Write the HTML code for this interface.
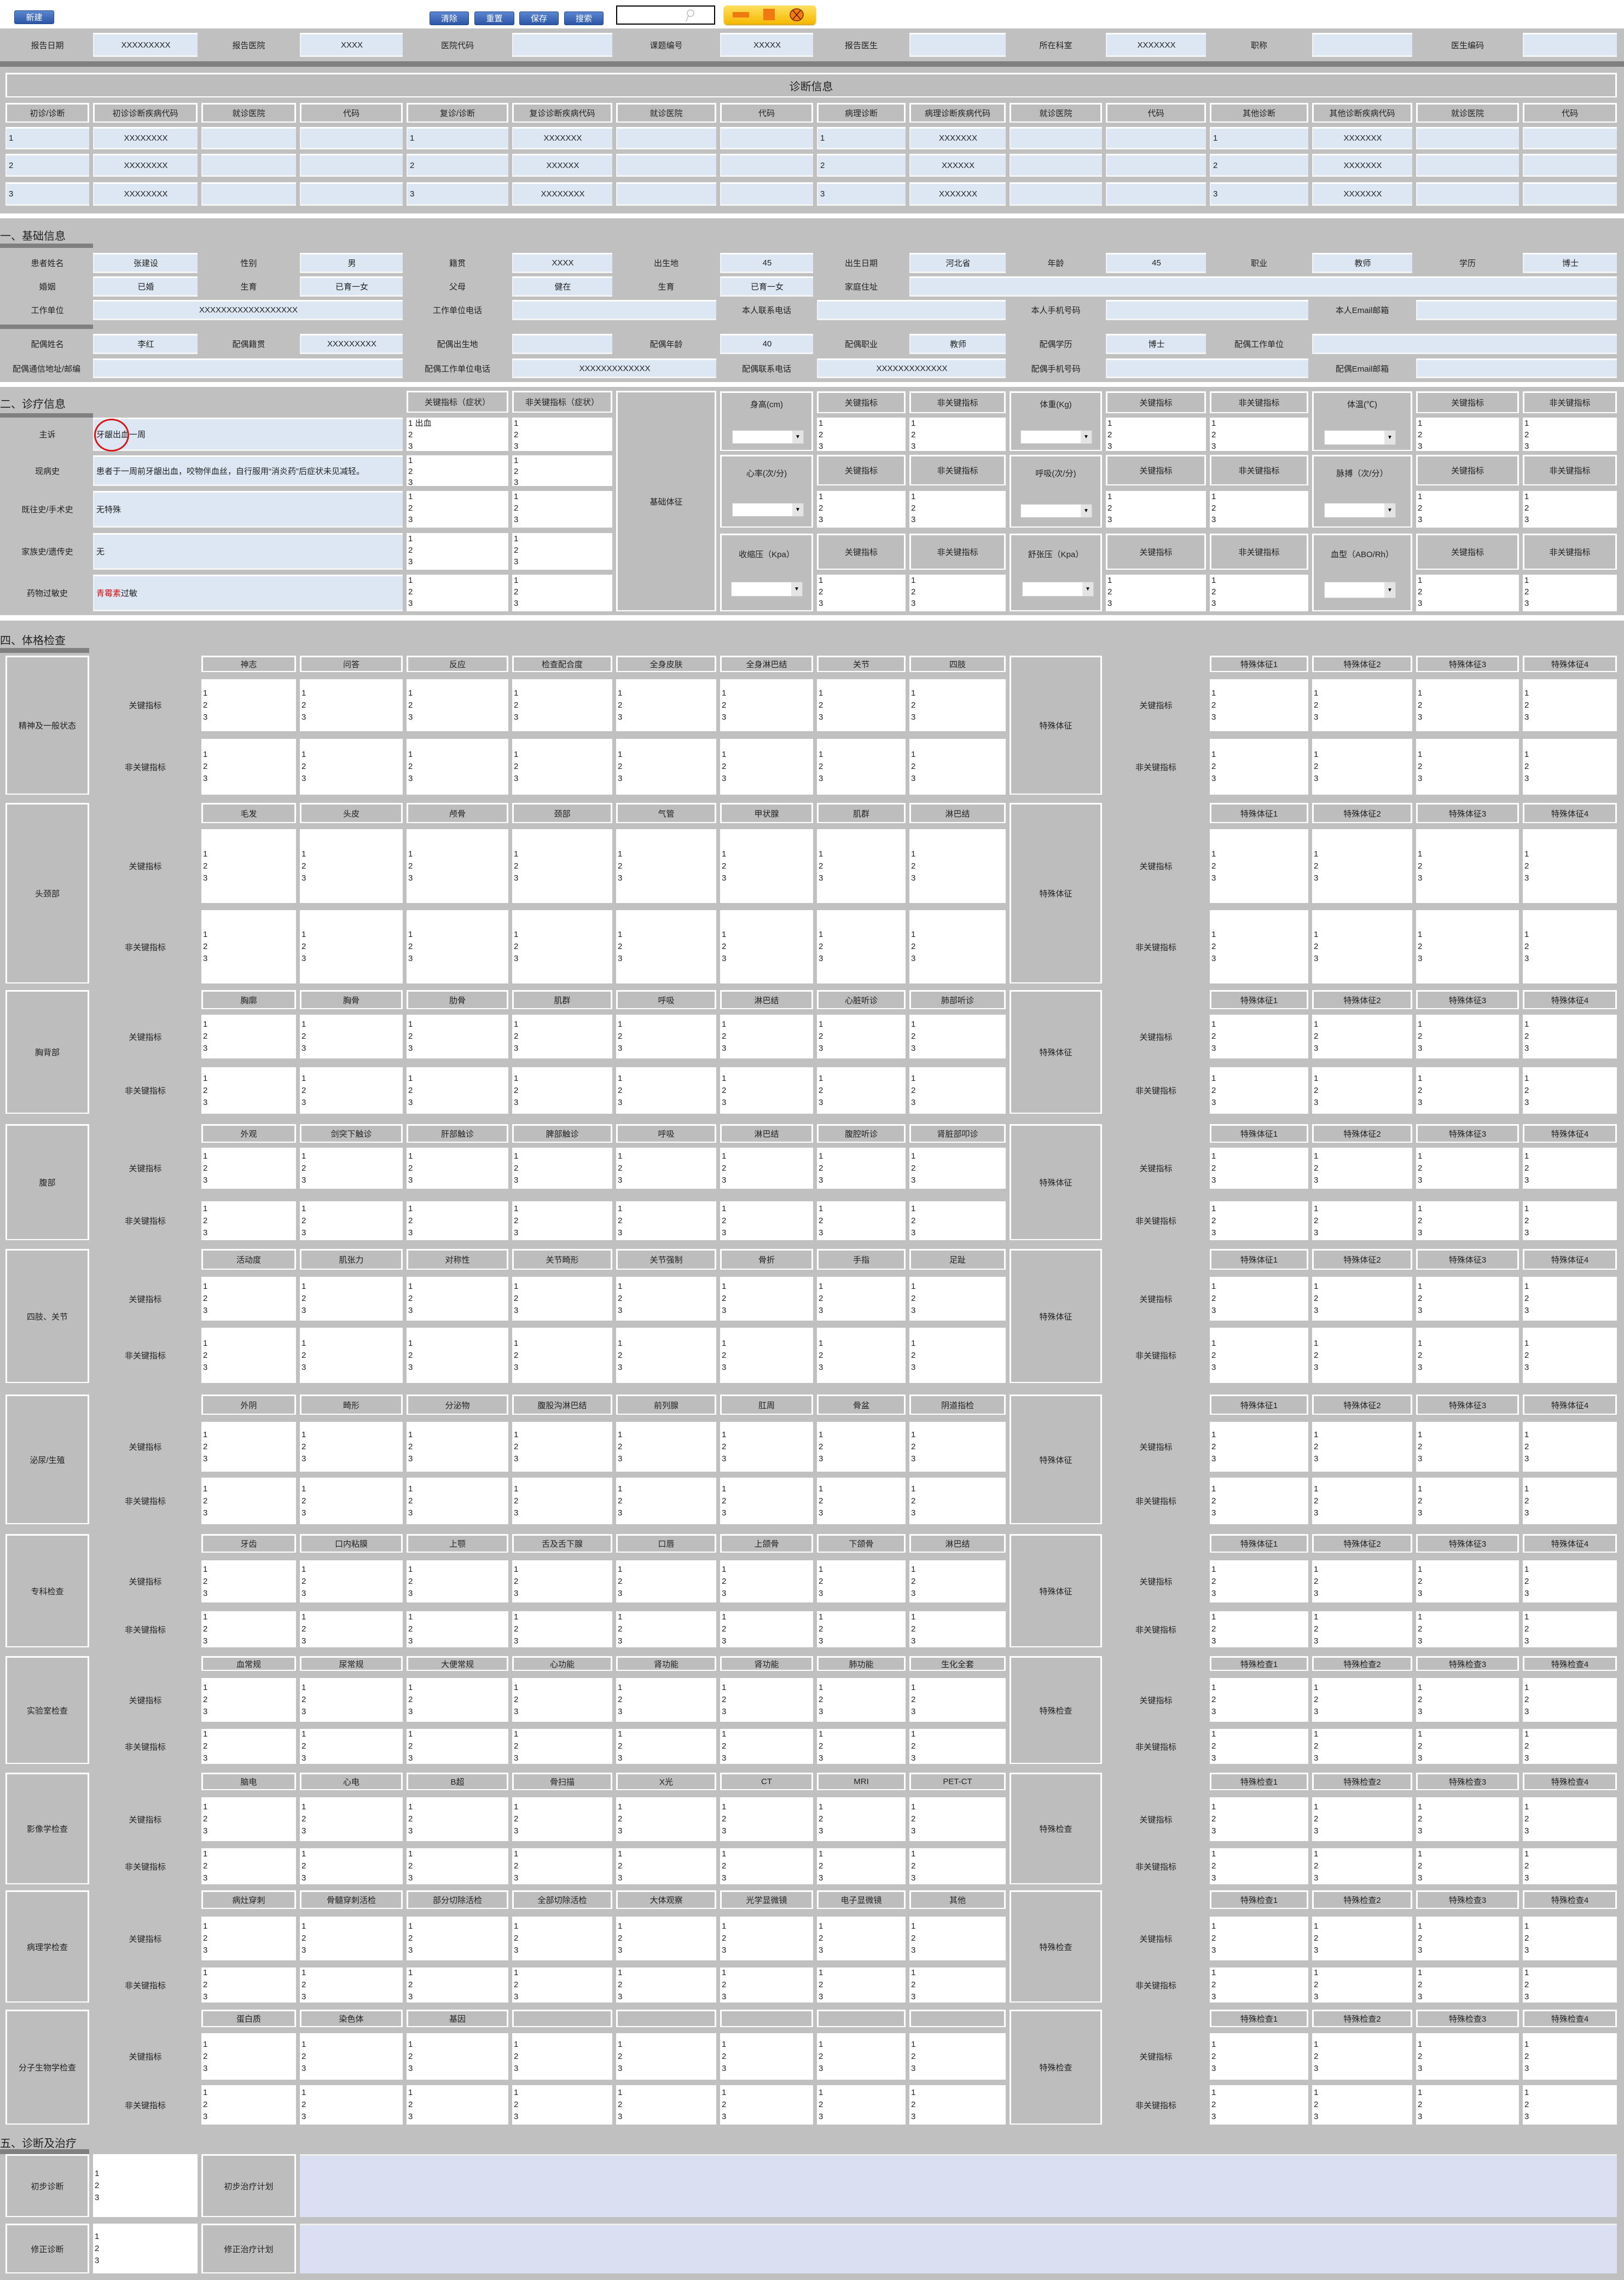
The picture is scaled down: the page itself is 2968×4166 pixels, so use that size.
<!DOCTYPE html>
<html><head><meta charset="utf-8">
<style>
body{margin:0;width:2968px;height:4166px;position:relative;background:#c0c0c0;font-family:"Liberation Sans","Noto Sans CJK SC",sans-serif;font-size:15px;color:#222;overflow:hidden}
.a{position:absolute;box-sizing:border-box}
.l{display:flex;align-items:center;justify-content:center;text-align:center}
.i{background:#dce7f3;border-top:3px solid #fff;border-left:2px solid #f2f2f2;border-bottom:3px solid #f4f4f4;display:flex;align-items:center;justify-content:center}
.il{justify-content:flex-start;padding-left:4px}
.h{border:3px solid #fff;border-bottom-width:2px;background:#bdbdbd;display:flex;align-items:center;justify-content:center;text-align:center}
.w{background:#fff;padding-left:3px;line-height:21px;white-space:pre}
.wc{display:flex;align-items:center;line-height:22px}
.bar{background:#808080}
.wh{background:#fff}
.t{font-size:20px;color:#222}
.btn{background:linear-gradient(#5b86d0,#2c56a6);color:#fff;border-radius:3px;border:1px solid #23468a;display:flex;align-items:center;justify-content:center;font-size:15px}
.sel{background:#fff;border:1px solid #ccc}
.sel:after{content:"▼";position:absolute;right:0;top:0;bottom:0;width:20px;background:#e4e4e4;font-size:10px;display:flex;align-items:center;justify-content:center;color:#000}
</style></head><body>
<div class="a wh" style="left:0;top:0;width:2968px;height:52px"></div>
<div class="a btn" style="left:26px;top:19px;width:73px;height:25px">新建</div>
<div class="a btn" style="left:785px;top:21px;width:72px;height:25px">清除</div>
<div class="a btn" style="left:867px;top:21px;width:73px;height:25px">重置</div>
<div class="a btn" style="left:949px;top:21px;width:72px;height:25px">保存</div>
<div class="a btn" style="left:1031px;top:21px;width:72px;height:25px">搜索</div>
<div class="a" style="left:1126px;top:10px;width:181px;height:35px;border:2px solid #000;background:#fff"><svg style="position:absolute;left:122px;top:3px" width="20" height="26" viewBox="0 0 20 26"><circle cx="12" cy="9" r="6" fill="none" stroke="#bbb" stroke-width="1.5"/><line x1="8" y1="14" x2="4" y2="24" stroke="#bbb" stroke-width="1.5"/></svg></div>
<div class="a" style="left:1323px;top:10px;width:168px;height:34px;border-radius:6px;background:linear-gradient(#ffe060,#f5b800);box-shadow:0 2px 2px #c90">
<div class="a" style="left:16px;top:12px;width:30px;height:10px;background:#f07a10"></div>
<div class="a" style="left:72px;top:6px;width:21px;height:21px;background:#f07a10"></div>
<svg class="a" style="left:118px;top:4px" width="30" height="26" viewBox="0 0 30 26"><ellipse cx="15" cy="13" rx="12" ry="11" fill="#f07a10" stroke="#7a2a00" stroke-width="1.5"/><line x1="8" y1="5" x2="22" y2="21" stroke="#5a1a00" stroke-width="1.5"/><line x1="22" y1="5" x2="8" y2="21" stroke="#5a1a00" stroke-width="1.5"/></svg>
</div>

<div class="a l" style="left:10px;top:60px;width:153px;height:44px">报告日期</div>
<div class="a i" style="left:170px;top:60px;width:191px;height:44px">XXXXXXXXX</div>
<div class="a l" style="left:368px;top:60px;width:173px;height:44px">报告医院</div>
<div class="a i" style="left:548px;top:60px;width:188px;height:44px">XXXX</div>
<div class="a l" style="left:743px;top:60px;width:186px;height:44px">医院代码</div>
<div class="a i" style="left:936px;top:60px;width:183px;height:44px"></div>
<div class="a l" style="left:1126px;top:60px;width:183px;height:44px">课题编号</div>
<div class="a i" style="left:1316px;top:60px;width:170px;height:44px">XXXXX</div>
<div class="a l" style="left:1493px;top:60px;width:162px;height:44px">报告医生</div>
<div class="a i" style="left:1662px;top:60px;width:176px;height:44px"></div>
<div class="a l" style="left:1845px;top:60px;width:169px;height:44px">所在科室</div>
<div class="a i" style="left:2021px;top:60px;width:183px;height:44px">XXXXXXX</div>
<div class="a l" style="left:2211px;top:60px;width:180px;height:44px">职称</div>
<div class="a i" style="left:2398px;top:60px;width:183px;height:44px"></div>
<div class="a l" style="left:2588px;top:60px;width:188px;height:44px">医生编码</div>
<div class="a i" style="left:2783px;top:60px;width:172px;height:44px"></div>
<div class="a bar" style="left:0;top:112px;width:2968px;height:10px"></div>

<div class="a h" style="left:10px;top:133px;width:2945px;height:45px;font-size:20px">诊断信息</div>

<div class="a h" style="left:10px;top:188px;width:153px;height:36px">初诊/诊断</div>
<div class="a h" style="left:170px;top:188px;width:191px;height:36px">初诊诊断疾病代码</div>
<div class="a h" style="left:368px;top:188px;width:173px;height:36px">就诊医院</div>
<div class="a h" style="left:548px;top:188px;width:188px;height:36px">代码</div>
<div class="a h" style="left:743px;top:188px;width:186px;height:36px">复诊/诊断</div>
<div class="a h" style="left:936px;top:188px;width:183px;height:36px">复诊诊断疾病代码</div>
<div class="a h" style="left:1126px;top:188px;width:183px;height:36px">就诊医院</div>
<div class="a h" style="left:1316px;top:188px;width:170px;height:36px">代码</div>
<div class="a h" style="left:1493px;top:188px;width:162px;height:36px">病理诊断</div>
<div class="a h" style="left:1662px;top:188px;width:176px;height:36px">病理诊断疾病代码</div>
<div class="a h" style="left:1845px;top:188px;width:169px;height:36px">就诊医院</div>
<div class="a h" style="left:2021px;top:188px;width:183px;height:36px">代码</div>
<div class="a h" style="left:2211px;top:188px;width:180px;height:36px">其他诊断</div>
<div class="a h" style="left:2398px;top:188px;width:183px;height:36px">其他诊断疾病代码</div>
<div class="a h" style="left:2588px;top:188px;width:188px;height:36px">就诊医院</div>
<div class="a h" style="left:2783px;top:188px;width:172px;height:36px">代码</div>

<div class="a i il" style="left:10px;top:232px;width:153px;height:41px">1</div>
<div class="a i" style="left:170px;top:232px;width:191px;height:41px">XXXXXXXX</div>
<div class="a i" style="left:368px;top:232px;width:173px;height:41px"></div>
<div class="a i" style="left:548px;top:232px;width:188px;height:41px"></div>
<div class="a i il" style="left:743px;top:232px;width:186px;height:41px">1</div>
<div class="a i" style="left:936px;top:232px;width:183px;height:41px">XXXXXXX</div>
<div class="a i" style="left:1126px;top:232px;width:183px;height:41px"></div>
<div class="a i" style="left:1316px;top:232px;width:170px;height:41px"></div>
<div class="a i il" style="left:1493px;top:232px;width:162px;height:41px">1</div>
<div class="a i" style="left:1662px;top:232px;width:176px;height:41px">XXXXXXX</div>
<div class="a i" style="left:1845px;top:232px;width:169px;height:41px"></div>
<div class="a i" style="left:2021px;top:232px;width:183px;height:41px"></div>
<div class="a i il" style="left:2211px;top:232px;width:180px;height:41px">1</div>
<div class="a i" style="left:2398px;top:232px;width:183px;height:41px">XXXXXXX</div>
<div class="a i" style="left:2588px;top:232px;width:188px;height:41px"></div>
<div class="a i" style="left:2783px;top:232px;width:172px;height:41px"></div>

<div class="a i il" style="left:10px;top:281px;width:153px;height:42px">2</div>
<div class="a i" style="left:170px;top:281px;width:191px;height:42px">XXXXXXXX</div>
<div class="a i" style="left:368px;top:281px;width:173px;height:42px"></div>
<div class="a i" style="left:548px;top:281px;width:188px;height:42px"></div>
<div class="a i il" style="left:743px;top:281px;width:186px;height:42px">2</div>
<div class="a i" style="left:936px;top:281px;width:183px;height:42px">XXXXXX</div>
<div class="a i" style="left:1126px;top:281px;width:183px;height:42px"></div>
<div class="a i" style="left:1316px;top:281px;width:170px;height:42px"></div>
<div class="a i il" style="left:1493px;top:281px;width:162px;height:42px">2</div>
<div class="a i" style="left:1662px;top:281px;width:176px;height:42px">XXXXXX</div>
<div class="a i" style="left:1845px;top:281px;width:169px;height:42px"></div>
<div class="a i" style="left:2021px;top:281px;width:183px;height:42px"></div>
<div class="a i il" style="left:2211px;top:281px;width:180px;height:42px">2</div>
<div class="a i" style="left:2398px;top:281px;width:183px;height:42px">XXXXXXX</div>
<div class="a i" style="left:2588px;top:281px;width:188px;height:42px"></div>
<div class="a i" style="left:2783px;top:281px;width:172px;height:42px"></div>

<div class="a i il" style="left:10px;top:333px;width:153px;height:43px">3</div>
<div class="a i" style="left:170px;top:333px;width:191px;height:43px">XXXXXXXX</div>
<div class="a i" style="left:368px;top:333px;width:173px;height:43px"></div>
<div class="a i" style="left:548px;top:333px;width:188px;height:43px"></div>
<div class="a i il" style="left:743px;top:333px;width:186px;height:43px">3</div>
<div class="a i" style="left:936px;top:333px;width:183px;height:43px">XXXXXXXX</div>
<div class="a i" style="left:1126px;top:333px;width:183px;height:43px"></div>
<div class="a i" style="left:1316px;top:333px;width:170px;height:43px"></div>
<div class="a i il" style="left:1493px;top:333px;width:162px;height:43px">3</div>
<div class="a i" style="left:1662px;top:333px;width:176px;height:43px">XXXXXXX</div>
<div class="a i" style="left:1845px;top:333px;width:169px;height:43px"></div>
<div class="a i" style="left:2021px;top:333px;width:183px;height:43px"></div>
<div class="a i il" style="left:2211px;top:333px;width:180px;height:43px">3</div>
<div class="a i" style="left:2398px;top:333px;width:183px;height:43px">XXXXXXX</div>
<div class="a i" style="left:2588px;top:333px;width:188px;height:43px"></div>
<div class="a i" style="left:2783px;top:333px;width:172px;height:43px"></div>

<div class="a wh" style="left:0;top:390px;width:2968px;height:9px"></div>

<div class="a t" style="left:0;top:415px">一、基础信息</div>
<div class="a bar" style="left:0;top:445px;width:170px;height:8px"></div>

<div class="a l" style="left:10px;top:462px;width:153px;height:37px">患者姓名</div>
<div class="a i" style="left:170px;top:462px;width:191px;height:37px">张建设</div>
<div class="a l" style="left:368px;top:462px;width:173px;height:37px">性别</div>
<div class="a i" style="left:548px;top:462px;width:188px;height:37px">男</div>
<div class="a l" style="left:743px;top:462px;width:186px;height:37px">籍贯</div>
<div class="a i" style="left:936px;top:462px;width:183px;height:37px">XXXX</div>
<div class="a l" style="left:1126px;top:462px;width:183px;height:37px">出生地</div>
<div class="a i" style="left:1316px;top:462px;width:170px;height:37px">45</div>
<div class="a l" style="left:1493px;top:462px;width:162px;height:37px">出生日期</div>
<div class="a i" style="left:1662px;top:462px;width:176px;height:37px">河北省</div>
<div class="a l" style="left:1845px;top:462px;width:169px;height:37px">年龄</div>
<div class="a i" style="left:2021px;top:462px;width:183px;height:37px">45</div>
<div class="a l" style="left:2211px;top:462px;width:180px;height:37px">职业</div>
<div class="a i" style="left:2398px;top:462px;width:183px;height:37px">教师</div>
<div class="a l" style="left:2588px;top:462px;width:188px;height:37px">学历</div>
<div class="a i" style="left:2783px;top:462px;width:172px;height:37px">博士</div>

<div class="a l" style="left:10px;top:505px;width:153px;height:37px">婚姻</div>
<div class="a i" style="left:170px;top:505px;width:191px;height:37px">已婚</div>
<div class="a l" style="left:368px;top:505px;width:173px;height:37px">生育</div>
<div class="a i" style="left:548px;top:505px;width:188px;height:37px">已育一女</div>
<div class="a l" style="left:743px;top:505px;width:186px;height:37px">父母</div>
<div class="a i" style="left:936px;top:505px;width:183px;height:37px">健在</div>
<div class="a l" style="left:1126px;top:505px;width:183px;height:37px">生育</div>
<div class="a i" style="left:1316px;top:505px;width:170px;height:37px">已育一女</div>
<div class="a l" style="left:1493px;top:505px;width:162px;height:37px">家庭住址</div>
<div class="a i" style="left:1662px;top:505px;width:1293px;height:37px"></div>

<div class="a l" style="left:10px;top:548px;width:153px;height:37px">工作单位</div>
<div class="a i" style="left:170px;top:548px;width:566px;height:37px">XXXXXXXXXXXXXXXXXX</div>
<div class="a l" style="left:743px;top:548px;width:186px;height:37px">工作单位电话</div>
<div class="a i" style="left:936px;top:548px;width:373px;height:37px"></div>
<div class="a l" style="left:1316px;top:548px;width:170px;height:37px">本人联系电话</div>
<div class="a i" style="left:1493px;top:548px;width:345px;height:37px"></div>
<div class="a l" style="left:1845px;top:548px;width:169px;height:37px">本人手机号码</div>
<div class="a i" style="left:2021px;top:548px;width:370px;height:37px"></div>
<div class="a l" style="left:2398px;top:548px;width:183px;height:37px">本人Email邮箱</div>
<div class="a i" style="left:2588px;top:548px;width:367px;height:37px"></div>
<div class="a bar" style="left:0;top:593px;width:170px;height:8px"></div>

<div class="a l" style="left:10px;top:610px;width:153px;height:37px">配偶姓名</div>
<div class="a i" style="left:170px;top:610px;width:191px;height:37px">李红</div>
<div class="a l" style="left:368px;top:610px;width:173px;height:37px">配偶籍贯</div>
<div class="a i" style="left:548px;top:610px;width:188px;height:37px">XXXXXXXXX</div>
<div class="a l" style="left:743px;top:610px;width:186px;height:37px">配偶出生地</div>
<div class="a i" style="left:936px;top:610px;width:183px;height:37px"></div>
<div class="a l" style="left:1126px;top:610px;width:183px;height:37px">配偶年龄</div>
<div class="a i" style="left:1316px;top:610px;width:170px;height:37px">40</div>
<div class="a l" style="left:1493px;top:610px;width:162px;height:37px">配偶职业</div>
<div class="a i" style="left:1662px;top:610px;width:176px;height:37px">教师</div>
<div class="a l" style="left:1845px;top:610px;width:169px;height:37px">配偶学历</div>
<div class="a i" style="left:2021px;top:610px;width:183px;height:37px">博士</div>
<div class="a l" style="left:2211px;top:610px;width:180px;height:37px">配偶工作单位</div>
<div class="a i" style="left:2398px;top:610px;width:557px;height:37px"></div>

<div class="a l" style="left:0px;top:655px;width:170px;height:36px">配偶通信地址/邮编</div>
<div class="a i" style="left:170px;top:655px;width:566px;height:36px"></div>
<div class="a l" style="left:743px;top:655px;width:186px;height:36px">配偶工作单位电话</div>
<div class="a i" style="left:936px;top:655px;width:373px;height:36px">XXXXXXXXXXXXX</div>
<div class="a l" style="left:1316px;top:655px;width:170px;height:36px">配偶联系电话</div>
<div class="a i" style="left:1493px;top:655px;width:345px;height:36px">XXXXXXXXXXXXX</div>
<div class="a l" style="left:1845px;top:655px;width:169px;height:36px">配偶手机号码</div>
<div class="a i" style="left:2021px;top:655px;width:370px;height:36px"></div>
<div class="a l" style="left:2398px;top:655px;width:183px;height:36px">配偶Email邮箱</div>
<div class="a i" style="left:2588px;top:655px;width:367px;height:36px"></div>

<div class="a wh" style="left:0;top:698px;width:2968px;height:9px"></div>

<div class="a t" style="left:0;top:722px">二、诊疗信息</div>
<div class="a bar" style="left:0;top:755px;width:170px;height:8px"></div>
<div class="a h" style="left:743px;top:714px;width:186px;height:40px">关键指标（症状）</div>
<div class="a h" style="left:936px;top:714px;width:183px;height:40px">非关键指标（症状）</div>
<div class="a h" style="left:1126px;top:714px;width:183px;height:403px">基础体征</div>

<div class="a l" style="left:10px;top:763px;width:153px;height:61px">主诉</div>
<div class="a i il" style="left:170px;top:763px;width:566px;height:61px">牙龈出血一周</div>
<div class="a" style="left:172px;top:765px;width:64px;height:60px;border:3px solid #d41818;border-radius:50%"></div>
<div class="a w" style="left:743px;top:763px;width:186px;height:61px">1 出血
2
3</div>
<div class="a w" style="left:936px;top:763px;width:183px;height:61px">1
2
3</div>

<div class="a l" style="left:10px;top:832px;width:153px;height:56px">现病史</div>
<div class="a i il" style="left:170px;top:832px;width:566px;height:56px">患者于一周前牙龈出血，咬物伴血丝，自行服用“消炎药”后症状未见减轻。</div>
<div class="a w" style="left:743px;top:832px;width:186px;height:56px;line-height:20px">1
2
3</div>
<div class="a w" style="left:936px;top:832px;width:183px;height:56px;line-height:20px">1
2
3</div>

<div class="a l" style="left:10px;top:897px;width:153px;height:67px">既往史/手术史</div>
<div class="a i il" style="left:170px;top:897px;width:566px;height:67px">无特殊</div>
<div class="a w" style="left:743px;top:897px;width:186px;height:67px">1
2
3</div>
<div class="a w" style="left:936px;top:897px;width:183px;height:67px">1
2
3</div>

<div class="a l" style="left:10px;top:974px;width:153px;height:67px">家族史/遗传史</div>
<div class="a i il" style="left:170px;top:974px;width:566px;height:67px">无</div>
<div class="a w" style="left:743px;top:974px;width:186px;height:67px">1
2
3</div>
<div class="a w" style="left:936px;top:974px;width:183px;height:67px">1
2
3</div>

<div class="a l" style="left:10px;top:1050px;width:153px;height:67px">药物过敏史</div>
<div class="a i il" style="left:170px;top:1050px;width:566px;height:67px"><span style="color:#d01010">青霉素</span>过敏</div>
<div class="a w" style="left:743px;top:1050px;width:186px;height:67px">1
2
3</div>
<div class="a w" style="left:936px;top:1050px;width:183px;height:67px">1
2
3</div>

<div class="a h" style="left:1316px;top:715px;width:170px;height:109px;align-items:flex-start;padding-top:10px">身高(cm)</div>
<div class="a sel" style="left:1338px;top:786px;width:131px;height:25px"></div>
<div class="a h" style="left:1493px;top:715px;width:162px;height:40px">关键指标</div>
<div class="a h" style="left:1662px;top:715px;width:176px;height:40px">非关键指标</div>
<div class="a w" style="left:1493px;top:763px;width:162px;height:61px">1
2
3</div>
<div class="a w" style="left:1662px;top:763px;width:176px;height:61px">1
2
3</div>
<div class="a h" style="left:1845px;top:715px;width:169px;height:109px;align-items:flex-start;padding-top:10px">体重(Kg)</div>
<div class="a sel" style="left:1865px;top:786px;width:131px;height:25px"></div>
<div class="a h" style="left:2021px;top:715px;width:183px;height:40px">关键指标</div>
<div class="a h" style="left:2211px;top:715px;width:180px;height:40px">非关键指标</div>
<div class="a w" style="left:2021px;top:763px;width:183px;height:61px">1
2
3</div>
<div class="a w" style="left:2211px;top:763px;width:180px;height:61px">1
2
3</div>
<div class="a h" style="left:2398px;top:715px;width:183px;height:109px;align-items:flex-start;padding-top:10px">体温(℃)</div>
<div class="a sel" style="left:2420px;top:786px;width:131px;height:27px"></div>
<div class="a h" style="left:2588px;top:715px;width:188px;height:40px">关键指标</div>
<div class="a h" style="left:2783px;top:715px;width:172px;height:40px">非关键指标</div>
<div class="a w" style="left:2588px;top:763px;width:188px;height:61px">1
2
3</div>
<div class="a w" style="left:2783px;top:763px;width:172px;height:61px">1
2
3</div>

<div class="a h" style="left:1316px;top:831px;width:170px;height:133px;align-items:flex-start;padding-top:20px">心率(次/分)</div>
<div class="a sel" style="left:1338px;top:919px;width:131px;height:25px"></div>
<div class="a h" style="left:1493px;top:831px;width:162px;height:56px">关键指标</div>
<div class="a h" style="left:1662px;top:831px;width:176px;height:56px">非关键指标</div>
<div class="a w" style="left:1493px;top:897px;width:162px;height:67px">1
2
3</div>
<div class="a w" style="left:1662px;top:897px;width:176px;height:67px">1
2
3</div>
<div class="a h" style="left:1845px;top:831px;width:169px;height:133px;align-items:flex-start;padding-top:20px">呼吸(次/分)</div>
<div class="a sel" style="left:1865px;top:921px;width:131px;height:25px"></div>
<div class="a h" style="left:2021px;top:831px;width:183px;height:56px">关键指标</div>
<div class="a h" style="left:2211px;top:831px;width:180px;height:56px">非关键指标</div>
<div class="a w" style="left:2021px;top:897px;width:183px;height:67px">1
2
3</div>
<div class="a w" style="left:2211px;top:897px;width:180px;height:67px">1
2
3</div>
<div class="a h" style="left:2398px;top:831px;width:183px;height:133px;align-items:flex-start;padding-top:20px">脉搏（次/分）</div>
<div class="a sel" style="left:2420px;top:919px;width:131px;height:27px"></div>
<div class="a h" style="left:2588px;top:831px;width:188px;height:56px">关键指标</div>
<div class="a h" style="left:2783px;top:831px;width:172px;height:56px">非关键指标</div>
<div class="a w" style="left:2588px;top:897px;width:188px;height:67px">1
2
3</div>
<div class="a w" style="left:2783px;top:897px;width:172px;height:67px">1
2
3</div>

<div class="a h" style="left:1316px;top:975px;width:170px;height:142px;align-items:flex-start;padding-top:24px">收缩压（Kpa）</div>
<div class="a sel" style="left:1336px;top:1063px;width:131px;height:27px"></div>
<div class="a h" style="left:1493px;top:975px;width:162px;height:66px">关键指标</div>
<div class="a h" style="left:1662px;top:975px;width:176px;height:66px">非关键指标</div>
<div class="a w" style="left:1493px;top:1050px;width:162px;height:67px">1
2
3</div>
<div class="a w" style="left:1662px;top:1050px;width:176px;height:67px">1
2
3</div>
<div class="a h" style="left:1845px;top:975px;width:169px;height:142px;align-items:flex-start;padding-top:24px">舒张压（Kpa）</div>
<div class="a sel" style="left:1868px;top:1063px;width:131px;height:27px"></div>
<div class="a h" style="left:2021px;top:975px;width:183px;height:66px">关键指标</div>
<div class="a h" style="left:2211px;top:975px;width:180px;height:66px">非关键指标</div>
<div class="a w" style="left:2021px;top:1050px;width:183px;height:67px">1
2
3</div>
<div class="a w" style="left:2211px;top:1050px;width:180px;height:67px">1
2
3</div>
<div class="a h" style="left:2398px;top:975px;width:183px;height:142px;align-items:flex-start;padding-top:24px">血型（ABO/Rh）</div>
<div class="a sel" style="left:2420px;top:1063px;width:131px;height:30px"></div>
<div class="a h" style="left:2588px;top:975px;width:188px;height:66px">关键指标</div>
<div class="a h" style="left:2783px;top:975px;width:172px;height:66px">非关键指标</div>
<div class="a w" style="left:2588px;top:1050px;width:188px;height:67px">1
2
3</div>
<div class="a w" style="left:2783px;top:1050px;width:172px;height:67px">1
2
3</div>

<div class="a wh" style="left:0;top:1124px;width:2968px;height:10px"></div>

<div class="a t" style="left:0;top:1154px">四、体格检查</div>
<div class="a bar" style="left:0;top:1184px;width:163px;height:9px"></div>

<div id="s4"></div>
<script>
(function(){
var S=[10,170,368,548,743,936,1126,1316,1493,1662,1845,2021,2211,2398,2588,2783];
var W=[153,191,173,188,186,183,183,170,162,176,169,183,180,183,188,172];
var B=[
["精神及一般状态",[1198,1228,1241,1336,1350,1452],["神志","问答","反应","检查配合度","全身皮肤","全身淋巴结","关节","四肢"],"特殊体征"],
["头颈部",[1467,1504,1515,1650,1663,1797],["毛发","头皮","颅骨","颈部","气管","甲状腺","肌群","淋巴结"],"特殊体征"],
["胸背部",[1809,1844,1854,1934,1950,2035],["胸廓","胸骨","肋骨","肌群","呼吸","淋巴结","心脏听诊","肺部听诊"],"特殊体征"],
["腹部",[2054,2088,2097,2172,2195,2266],["外观","剑突下触诊","肝部触诊","脾部触诊","呼吸","淋巴结","腹腔听诊","肾脏部叩诊"],"特殊体征"],
["四肢、关节",[2282,2320,2333,2413,2426,2527],["活动度","肌张力","对称性","关节畸形","关节强制","骨折","手指","足趾"],"特殊体征"],
["泌尿/生殖",[2548,2585,2598,2689,2700,2785],["外阴","畸形","分泌物","腹股沟淋巴结","前列腺","肛周","骨盆","阴道指检"],"特殊体征"],
["专科检查",[2803,2837,2851,2928,2944,3010],["牙齿","口内粘膜","上颚","舌及舌下腺","口唇","上颌骨","下颌骨","淋巴结"],"特殊体征"],
["实验室检查",[3026,3053,3066,3146,3159,3223],["血常规","尿常规","大便常规","心功能","肾功能","肾功能","肺功能","生化全套"],"特殊检查"],
["影像学检查",[3239,3271,3284,3364,3377,3443],["脑电","心电","B超","骨扫描","X光","CT","MRI","PET-CT"],"特殊检查"],
["病理学检查",[3454,3488,3502,3582,3595,3659],["病灶穿刺","骨髓穿刺活检","部分切除活检","全部切除活检","大体观察","光学显微镜","电子显微镜","其他"],"特殊检查"],
["分子生物学检查",[3672,3704,3715,3800,3810,3882],["蛋白质","染色体","基因","","","","",""],"特殊检查"]
];
var h="";
function d(c,x,y,w,hh,t,st){h+='<div class="a '+c+'" style="left:'+x+'px;top:'+y+'px;width:'+w+'px;height:'+hh+'px'+(st||'')+'">'+t+'</div>';}
B.forEach(function(b){
var y=b[1];
d("h",S[0],y[0],W[0],y[5]-y[0],b[0]);
d("h",S[10],y[0],W[10],y[5]-y[0],b[3]);
d("l",S[1],y[2],W[1],y[3]-y[2],"关键指标");
d("l",S[1],y[4],W[1],y[5]-y[4],"非关键指标");
d("l",S[11],y[2],W[11],y[3]-y[2],"关键指标");
d("l",S[11],y[4],W[11],y[5]-y[4],"非关键指标");
var cols=[2,3,4,5,6,7,8,9,12,13,14,15];
cols.forEach(function(c,k){
var t=k<8?b[2][k]:(b[3]+(k-7));
d("h",S[c],y[0],W[c],y[1]-y[0],t);
d("w wc",S[c],y[2],W[c],y[3]-y[2],"1<br>2<br>3");
d("w wc",S[c],y[4],W[c],y[5]-y[4],"1<br>2<br>3");
});
});
document.getElementById("s4").outerHTML=h;
})();
</script>

<div class="a t" style="left:0;top:3900px">五、诊断及治疗</div>
<div class="a bar" style="left:0;top:3927px;width:163px;height:9px"></div>
<div class="a h" style="left:10px;top:3936px;width:153px;height:115px">初步诊断</div>
<div class="a w wc" style="left:170px;top:3936px;width:191px;height:115px">1<br>2<br>3</div>
<div class="a h" style="left:368px;top:3936px;width:173px;height:115px">初步治疗计划</div>
<div class="a" style="left:548px;top:3936px;width:2407px;height:115px;background:#dbdff2;border-top:3px solid #eee"></div>
<div class="a h" style="left:10px;top:4063px;width:153px;height:91px">修正诊断</div>
<div class="a w wc" style="left:170px;top:4063px;width:191px;height:91px">1<br>2<br>3</div>
<div class="a h" style="left:368px;top:4063px;width:173px;height:91px">修正治疗计划</div>
<div class="a" style="left:548px;top:4063px;width:2407px;height:91px;background:#dbdff2;border-top:3px solid #eee"></div>
</body></html>
